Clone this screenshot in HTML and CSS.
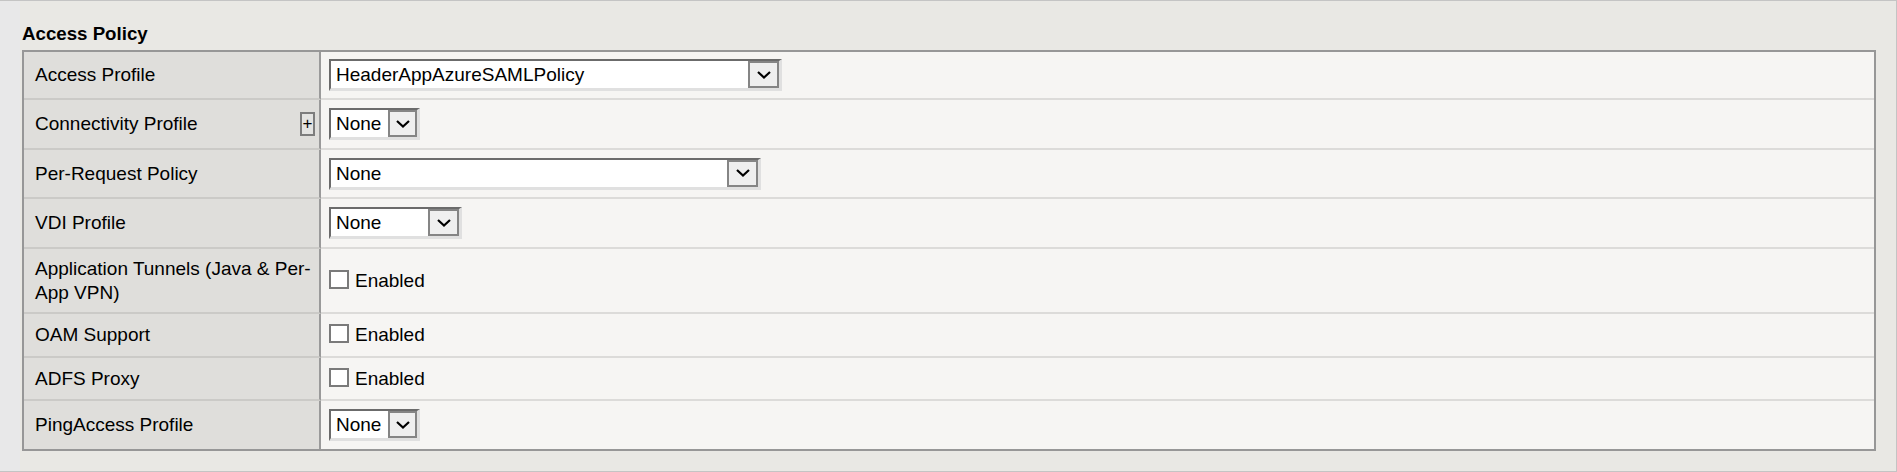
FILE: index.html
```html
<!DOCTYPE html>
<html lang="en">
<head>
<meta charset="utf-8">
<title>Access Policy</title>
<link rel="stylesheet" href="styles.css">
</head>
<body>
<div class="frame">
  <div class="gutter"></div>
  <div class="panel">
    <h2 class="title">Access Policy</h2>
    <div class="props">
      <div class="label h48">Access Profile</div>
      <div class="value h48">
        <div class="select w-access"><span class="sel-text">HeaderAppAzureSAMLPolicy</span><span class="sel-btn"><svg width="14" height="8" viewBox="0 0 14 8"><path d="M1 1 L7 6.5 L13 1" fill="none" stroke="#000" stroke-width="2.2"/></svg></span></div>
      </div>

      <div class="label h50">Connectivity Profile<span class="plus">+</span></div>
      <div class="value h50">
        <div class="select w-small"><span class="sel-text">None</span><span class="sel-btn"><svg width="14" height="8" viewBox="0 0 14 8"><path d="M1 1 L7 6.5 L13 1" fill="none" stroke="#000" stroke-width="2.2"/></svg></span></div>
      </div>

      <div class="label h49">Per-Request Policy</div>
      <div class="value h49">
        <div class="select w-perreq"><span class="sel-text">None</span><span class="sel-btn"><svg width="14" height="8" viewBox="0 0 14 8"><path d="M1 1 L7 6.5 L13 1" fill="none" stroke="#000" stroke-width="2.2"/></svg></span></div>
      </div>

      <div class="label h50">VDI Profile</div>
      <div class="value h50">
        <div class="select w-vdi"><span class="sel-text">None</span><span class="sel-btn"><svg width="14" height="8" viewBox="0 0 14 8"><path d="M1 1 L7 6.5 L13 1" fill="none" stroke="#000" stroke-width="2.2"/></svg></span></div>
      </div>

      <div class="label h65">Application Tunnels (Java &amp; Per-App VPN)</div>
      <div class="value h65">
        <label class="check"><span class="cb"></span>Enabled</label>
      </div>

      <div class="label h44">OAM Support</div>
      <div class="value h44">
        <label class="check"><span class="cb"></span>Enabled</label>
      </div>

      <div class="label h43">ADFS Proxy</div>
      <div class="value h43">
        <label class="check"><span class="cb"></span>Enabled</label>
      </div>

      <div class="label h48 last">PingAccess Profile</div>
      <div class="value h48 last">
        <div class="select w-small"><span class="sel-text">None</span><span class="sel-btn"><svg width="14" height="8" viewBox="0 0 14 8"><path d="M1 1 L7 6.5 L13 1" fill="none" stroke="#000" stroke-width="2.2"/></svg></span></div>
      </div>
    </div>
  </div>
</div>
</body>
</html>
```
FILE: styles.css
```css
html, body {
  margin: 0;
  padding: 0;
}
body {
  background: #e9e8e4;
  font-family: "Liberation Sans", Arial, sans-serif;
  font-size: 19px;
  color: #000;
}
.frame {
  display: flex;
  height: 472px;
  box-sizing: border-box;
  border-top: 1px solid #c4c4c4;
  border-right: 1px solid #c4c4c4;
  border-bottom: 1px solid #c4c4c4;
}
.gutter {
  width: 20px;
  background: #e8e8e9;
}
.panel {
  flex: 1;
  padding: 22px 20px 0 2px;
}
.title {
  margin: 0 0 6px 0;
  font-size: 18.7px;
  line-height: 21px;
  font-weight: bold;
}
.props {
  display: grid;
  grid-template-columns: 297px 1fr;
  border: 2px solid #979797;
}
.label {
  box-sizing: border-box;
  background: #dfdedb;
  border-right: 2px solid #9a9a9a;
  border-bottom: 2px solid #cbcac7;
  padding: 0 8px 0 11px;
  line-height: 24px;
  display: flex;
  align-items: center;
}
.value {
  box-sizing: border-box;
  background: #f6f5f3;
  border-bottom: 2px solid #dcdbd9;
  padding: 0 8px;
  line-height: 24px;
  display: flex;
  align-items: center;
}
.last {
  border-bottom: 0;
}
.h43 { height: 43px; }
.h44 { height: 44px; }
.h48 { height: 48px; }
.h49 { height: 49px; }
.h50 { height: 50px; }
.h65 { height: 65px; }

.plus {
  margin-left: auto;
  margin-right: -4px;
  width: 15px;
  height: 24px;
  box-sizing: border-box;
  border: 2px solid #7d7d7d;
  background: #e4e4e2;
  font-size: 17px;
  line-height: 19px;
  text-align: center;
}

.select {
  display: flex;
  height: 32px;
  box-sizing: border-box;
  border-style: solid;
  border-width: 2px 3px 3px 2px;
  border-color: #6b6b6b #e0e0e0 #e0e0e0 #6b6b6b;
  background: #fff;
}
.sel-text {
  flex: 1;
  padding-left: 5px;
  line-height: 27px;
  white-space: nowrap;
  overflow: hidden;
}
.sel-btn {
  width: 31px;
  box-sizing: border-box;
  border: 2px solid #858585;
  background: #efefef;
  display: flex;
  align-items: center;
  justify-content: center;
}
.w-access { width: 453px; }
.w-perreq { width: 432px; }
.w-vdi { width: 133px; }
.w-small { width: 91px; }
.w-small .sel-btn { width: 29px; }

.check {
  display: flex;
  align-items: flex-end;
}
.cb {
  width: 20px;
  height: 19px;
  box-sizing: border-box;
  border: 2px solid #7a7a7a;
  background: #fff;
  margin-right: 6px;
  margin-bottom: 4px;
}
```
